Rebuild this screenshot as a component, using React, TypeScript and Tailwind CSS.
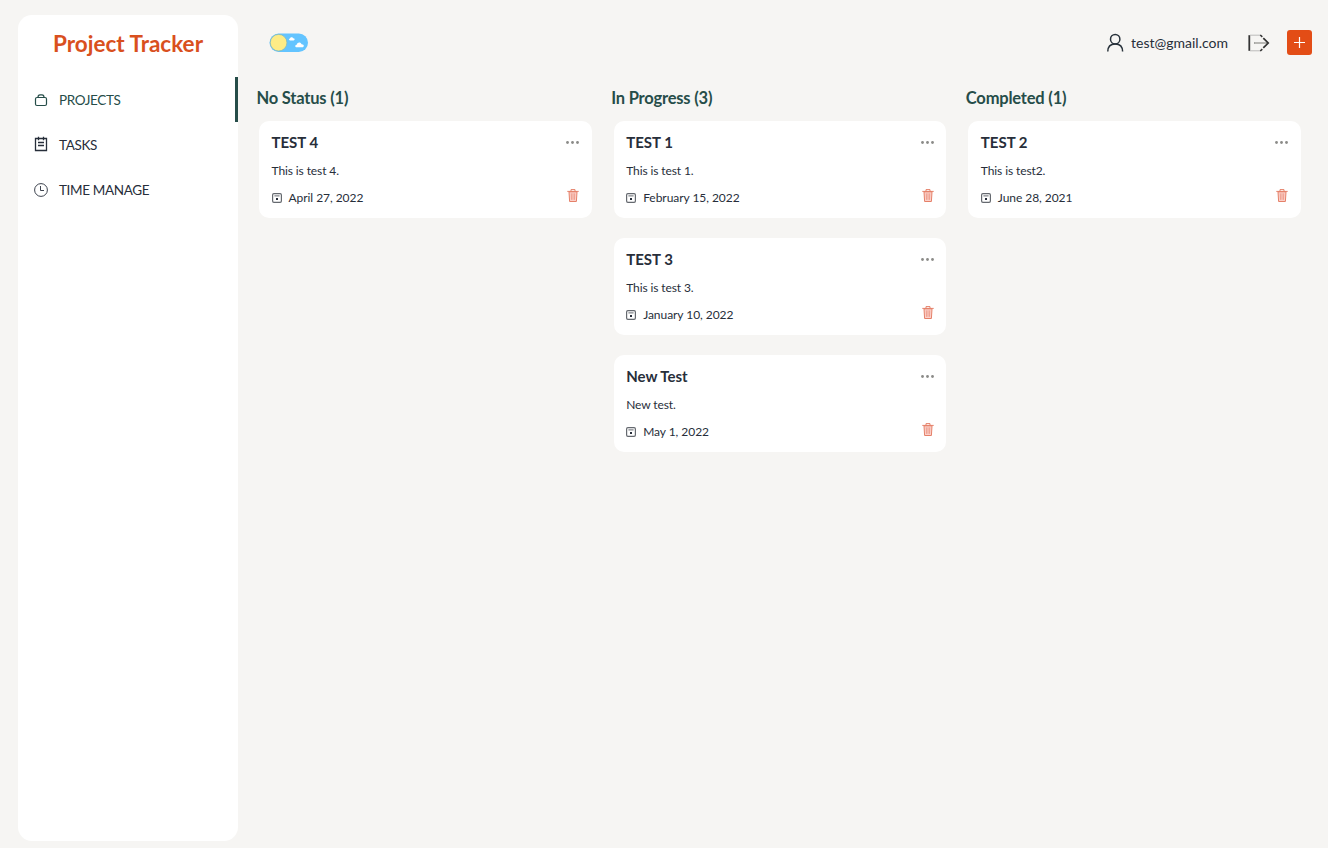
import type { ReactNode } from "react";

type Project = { title: string; text: string; date: string };
type Column = { name: string; items: Project[] };

const columns: Column[] = [
  { name: "No Status", items: [{ title: "TEST 4", text: "This is test 4.", date: "April 27, 2022" }] },
  {
    name: "In Progress",
    items: [
      { title: "TEST 1", text: "This is test 1.", date: "February 15, 2022" },
      { title: "TEST 3", text: "This is test 3.", date: "January 10, 2022" },
      { title: "New Test", text: "New test.", date: "May 1, 2022" },
    ],
  },
  { name: "Completed", items: [{ title: "TEST 2", text: "This is test2.", date: "June 28, 2021" }] },
];

function BriefcaseIcon() {
  return (
    <svg width="14" height="14" viewBox="0 0 14 14" fill="none" stroke="currentColor" strokeWidth="1.2">
      <rect x="1.5" y="4.5" width="11" height="8" rx="1.5" />
      <path d="M4 4.3C4 2.4 4.8 1.9 6 1.9h2c1.2 0 2 .5 2 2.4" />
    </svg>
  );
}

function TasksIcon() {
  return (
    <svg className="mb-px" width="14" height="16" viewBox="0 0 14 16" fill="none" stroke="currentColor" strokeWidth="1.3">
      <path d="M1.5 2.5h11v12h-11z" />
      <path d="M4.5 .8v3.4M9.5 .8v3.4M4 6.5h6M4 9.5h6" />
    </svg>
  );
}

function ClockIcon() {
  return (
    <svg width="14" height="14" viewBox="0 0 14 14" fill="none" stroke="currentColor" strokeWidth="0.9">
      <circle cx="7" cy="7" r="6.4" />
      <path d="M6.5 3v4.5H10" />
    </svg>
  );
}

function CalendarIcon() {
  return (
    <svg className="shrink-0" width="10" height="10" viewBox="0 0 10 10" fill="none" stroke="#65696f" strokeWidth="1.2">
      <rect x=".6" y=".6" width="8.8" height="8.8" rx="1.3" />
      <path d="M2.4 2.9h5.2" strokeWidth="1" />
      <path d="M4 5h2v2H4z" fill="#272e3a" stroke="none" />
    </svg>
  );
}

function TrashIcon() {
  return (
    <svg width="12" height="13" viewBox="0 0 12 13" fill="none" stroke="#e58069" strokeWidth="1">
      <path d="M2 2.8l.6 9.7h6.8l.6-9.7z" fill="#fbd0c9" />
      <path d="M.3 2.4h11.4M4 2.2V.6h4v1.6" />
      <path d="M4.3 4.3l.2 6.5M6 4.3v6.5M7.7 4.3l-.2 6.5" strokeWidth=".6" />
    </svg>
  );
}

function DotsIcon() {
  return (
    <svg width="13" height="3" viewBox="0 0 13 3" fill="#8b8b88">
      <circle cx="1.5" cy="1.5" r="1.4" />
      <circle cx="6.5" cy="1.5" r="1.4" />
      <circle cx="11.5" cy="1.5" r="1.4" />
    </svg>
  );
}

function ThemeToggle() {
  return (
    <svg width="40" height="20" viewBox="0 0 40 20">
      <rect x=".5" y=".5" width="38.5" height="18.4" rx="9.2" fill="#63c4ff" />
      <circle cx="9.6" cy="9.7" r="8.3" fill="#fdec86" stroke="#86b7b4" strokeWidth=".7" />
      <path d="M21 7.4c-1.4 0-1.3-1.8 0-1.8.2-1.8 2.8-1.9 3.2-.3 1.9-.1 1.9 2.1.4 2.1z" fill="#fff" />
      <path d="M27.8 14.3c-2.1 0-2-2.6 0-2.6.4-2.8 4.1-2.9 4.7-.5 3-.2 3 3.1.6 3.1z" fill="#fff" />
    </svg>
  );
}

function UserIcon() {
  return (
    <svg width="17" height="19" viewBox="0 0 17 19" fill="none" stroke="#28323b" strokeWidth="1.5">
      <circle cx="8.2" cy="6.2" r="4.7" />
      <path d="M.8 18.6c0-4.6 2.6-7.6 7.4-7.6s7.4 3 7.4 7.6" />
    </svg>
  );
}

function LogoutIcon() {
  return (
    <svg width="22" height="18" viewBox="0 0 22 18" fill="none">
      <path d="M1.3 1.2v15.6" stroke="#343434" strokeWidth="1.8" />
      <path d="M2 1.2h11M2 16.8h11" stroke="#b5b5b3" strokeWidth=".9" />
      <path d="M12.3 1l2 1.8M12.3 17l2-1.8" stroke="#343434" strokeWidth="1.6" />
      <path d="M6 9h13" stroke="#a5a5a2" strokeWidth="2" />
      <path d="M7 9h11" stroke="#e4e3e1" strokeWidth=".6" />
      <path d="M15.3 4.2l4.9 4.8-4.9 4.8" stroke="#303030" strokeWidth="1.7" />
    </svg>
  );
}

function NavItem({ icon, label, active = false }: { icon: ReactNode; label: string; active?: boolean }) {
  return (
    <a
      className={
        active
          ? "flex h-[45px] items-center border-r-[3px] border-[#264d49] pl-4 text-[#264d49]"
          : "flex h-[45px] items-center pl-4 text-[#272e3a]"
      }
    >
      <span className="flex w-[25px] items-center">{icon}</span>
      <span className="text-[13.5px] leading-5 tracking-[-0.35px]">{label}</span>
    </a>
  );
}

function ProjectCard({ title, text, date }: Project) {
  return (
    <article className="flex h-[97px] flex-col rounded-[10px] bg-white px-[12.5px] pt-[10px]">
      <div className="flex h-[22px] items-center justify-between">
        <h3 className="text-[15px] font-bold leading-5 text-[#272e3a]">{title}</h3>
        <DotsIcon />
      </div>
      <p className="mt-2 text-[12px] leading-5 tracking-[-0.1px] text-[#272e3a]">{text}</p>
      <div className="mt-[7px] flex h-5 items-center justify-between">
        <div className="flex items-center gap-[7px] text-[12px] leading-5 tracking-[-0.05px] text-[#272e3a]">
          <CalendarIcon />
          <span>{date}</span>
        </div>
        <span className="mb-[5px]">
          <TrashIcon />
        </span>
      </div>
    </article>
  );
}

export default function App() {
  return (
    <div className="flex h-[848px] w-full overflow-hidden bg-[#f6f5f3] pl-[18px] font-['Lato',sans-serif] text-[#272e3a]">
      <aside className="mt-[15px] h-[826px] w-[220px] shrink-0 rounded-[14px] bg-white">
        <h1 className="flex h-[62px] items-center justify-center pb-[5px] text-[22.5px] font-bold leading-7 text-[#d9501e]">
          Project Tracker
        </h1>
        <nav>
          <NavItem icon={<BriefcaseIcon />} label="PROJECTS" active />
          <NavItem icon={<TasksIcon />} label="TASKS" />
          <NavItem icon={<ClockIcon />} label="TIME MANAGE" />
        </nav>
      </aside>

      <div className="flex min-w-0 flex-1 flex-col">
        <header className="flex h-[85px] items-center justify-between pl-[31px] pr-4">
          <ThemeToggle />
          <div className="flex items-center">
            <UserIcon />
            <span className="ml-[7px] text-[14px] leading-5">test@gmail.com</span>
            <span className="ml-5">
              <LogoutIcon />
            </span>
            <button className="ml-[17px] flex h-[25px] w-[25px] items-center justify-center rounded-[3px] bg-[#e34d16]">
              <svg width="13" height="13" viewBox="0 0 13 13" stroke="#fff" strokeWidth="1.2">
                <path d="M6.5 1v11M1 6.5h11" />
              </svg>
            </button>
          </div>
        </header>
        <main className="grid grid-cols-3 gap-[22px] pl-[21px] pr-[27px]">
          {columns.map((col) => (
            <section key={col.name}>
              <h2 className="-ml-[2.5px] h-9 pt-[3px] text-[16.5px] font-bold leading-5 tracking-[-0.2px] text-[#264d49]">
                {col.name} ({col.items.length})
              </h2>
              <div className="flex flex-col gap-5">
                {col.items.map((p) => (
                  <ProjectCard key={p.title} {...p} />
                ))}
              </div>
            </section>
          ))}
        </main>
      </div>
    </div>
  );
}
